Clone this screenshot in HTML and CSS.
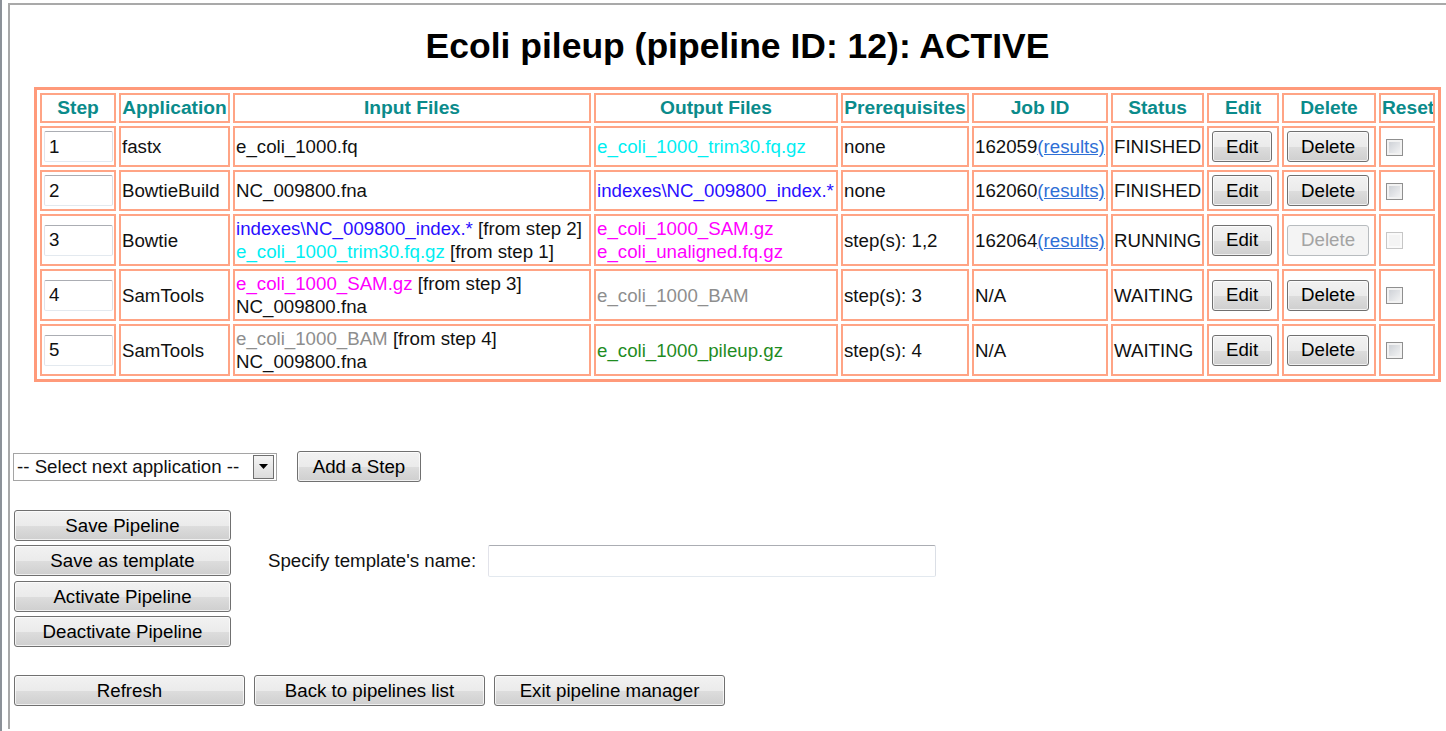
FILE: index.html
```html
<!DOCTYPE html>
<html>
<head>
  <meta charset="utf-8">
  <title>Pipeline manager</title>
  <link rel="stylesheet" href="styles.css">
</head>
<body>
<div class="page">
  <h1 class="title">Ecoli pileup (pipeline ID: 12): ACTIVE</h1>

  <table class="steps">
    <tr>
      <th class="c-step">Step</th>
      <th class="c-app">Application</th>
      <th class="c-in">Input Files</th>
      <th class="c-out">Output Files</th>
      <th class="c-pre">Prerequisites</th>
      <th class="c-job">Job ID</th>
      <th class="c-status">Status</th>
      <th class="c-edit">Edit</th>
      <th class="c-del">Delete</th>
      <th class="c-reset">Reset</th>
    </tr>
    <tr>
      <td><input type="text" class="step-no" value="1"></td>
      <td>fastx</td>
      <td>e_coli_1000.fq</td>
      <td><span class="f-cyan">e_coli_1000_trim30.fq.gz</span></td>
      <td>none</td>
      <td>162059<a href="#" class="results">(results)</a></td>
      <td>FINISHED</td>
      <td><button class="btn">Edit</button></td>
      <td><button class="btn">Delete</button></td>
      <td><input type="checkbox" class="tick"></td>
    </tr>
    <tr>
      <td><input type="text" class="step-no" value="2"></td>
      <td>BowtieBuild</td>
      <td>NC_009800.fna</td>
      <td><span class="f-blue">indexes\NC_009800_index.*</span></td>
      <td>none</td>
      <td>162060<a href="#" class="results">(results)</a></td>
      <td>FINISHED</td>
      <td><button class="btn">Edit</button></td>
      <td><button class="btn">Delete</button></td>
      <td><input type="checkbox" class="tick"></td>
    </tr>
    <tr class="tall">
      <td><input type="text" class="step-no" value="3"></td>
      <td>Bowtie</td>
      <td><span class="f-blue">indexes\NC_009800_index.*</span> [from step 2]<br><span class="f-cyan">e_coli_1000_trim30.fq.gz</span> [from step 1]</td>
      <td><span class="f-pink">e_coli_1000_SAM.gz</span><br><span class="f-pink">e_coli_unaligned.fq.gz</span></td>
      <td>step(s): 1,2</td>
      <td>162064<a href="#" class="results">(results)</a></td>
      <td>RUNNING</td>
      <td><button class="btn">Edit</button></td>
      <td><button class="btn" disabled>Delete</button></td>
      <td><input type="checkbox" class="tick" disabled></td>
    </tr>
    <tr class="tall">
      <td><input type="text" class="step-no" value="4"></td>
      <td>SamTools</td>
      <td><span class="f-pink">e_coli_1000_SAM.gz</span> [from step 3]<br>NC_009800.fna</td>
      <td><span class="f-gray">e_coli_1000_BAM</span></td>
      <td>step(s): 3</td>
      <td>N/A</td>
      <td>WAITING</td>
      <td><button class="btn">Edit</button></td>
      <td><button class="btn">Delete</button></td>
      <td><input type="checkbox" class="tick"></td>
    </tr>
    <tr class="tall">
      <td><input type="text" class="step-no" value="5"></td>
      <td>SamTools</td>
      <td><span class="f-gray">e_coli_1000_BAM</span> [from step 4]<br>NC_009800.fna</td>
      <td><span class="f-green">e_coli_1000_pileup.gz</span></td>
      <td>step(s): 4</td>
      <td>N/A</td>
      <td>WAITING</td>
      <td><button class="btn">Edit</button></td>
      <td><button class="btn">Delete</button></td>
      <td><input type="checkbox" class="tick"></td>
    </tr>
  </table>

  <div class="add-step">
    <div class="picker">
      <select class="app-select">
        <option>-- Select next application --</option>
        <option>fastx</option>
        <option>Bowtie</option>
        <option>BowtieBuild</option>
        <option>SamTools</option>
      </select>
      <span class="drop">
        <svg width="9" height="5" viewBox="0 0 9 5"><path d="M0 0h9L4.5 5z" fill="#000"/></svg>
      </span>
    </div>
    <button class="btn btn-add">Add a Step</button>
  </div>

  <div class="actions">
    <button class="btn">Save Pipeline</button>
    <span></span>
    <button class="btn">Save as template</button>
    <div class="template">
      <label for="tname">Specify template's name:</label>
      <input type="text" id="tname" class="tname">
    </div>
    <button class="btn">Activate Pipeline</button>
    <span></span>
    <button class="btn">Deactivate Pipeline</button>
    <span></span>
  </div>

  <div class="nav">
    <button class="btn btn-wide">Refresh</button>
    <button class="btn btn-wide">Back to pipelines list</button>
    <button class="btn btn-wide">Exit pipeline manager</button>
  </div>
</div>
</body>
</html>
```

FILE: styles.css
```css
html, body {
  margin: 0;
  height: 100%;
}

body {
  border-left: 2px solid #8c9198;
  background: #fff;
  font-family: "Liberation Sans", Arial, sans-serif;
  font-size: 18.7px;
  color: #111;
}

.page {
  margin: 3px 0 0 6px;
  border-left: 2px solid #a9a9a9;
  border-top: 2px solid #a9a9a9;
  min-height: calc(100% - 5px);
  box-sizing: border-box;
}

.title {
  margin: 20px 0 0 24px;
  width: 1407px;
  text-align: center;
  font-size: 35.5px;
  line-height: 42px;
  font-weight: bold;
  color: #000;
}

/* steps table */
.steps {
  margin: 20px 0 0 24px;
  width: 1407px;
  table-layout: fixed;
  border: 3px solid #ff9a7a;
  border-spacing: 3px;
}

.steps th, .steps td {
  box-sizing: border-box;
  border: 2px solid #ffa485;
  padding: 1px;
  vertical-align: middle;
  white-space: nowrap;
  overflow: hidden;
}

.steps th {
  color: #0a8b8b;
  font-size: 19.2px;
  line-height: 24px;
  text-align: center;
}

.steps td {
  line-height: 23px;
  text-align: left;
}

.steps .tall td {
  height: 52px;
}

.c-step { width: 76px; }
.c-app { width: 111px; }
.c-in { width: 358px; }
.c-out { width: 244px; }
.c-pre { width: 128px; }
.c-job { width: 136px; }
.c-status { width: 93px; }
.c-edit { width: 72px; }
.c-del { width: 94px; }
.c-reset { width: 56px; }

.f-cyan { color: #00eef2; }
.f-blue { color: #2a0fff; }
.f-pink { color: #ff00ff; }
.f-gray { color: #8e8e8e; }
.f-green { color: #1f8c1f; }

.results {
  color: #2f6fd6;
  text-decoration: underline;
}

/* form controls */
.step-no, .tname {
  box-sizing: border-box;
  border: 1px solid;
  border-color: #abadb3 #dbdfe6 #e3e9ef #e2e3ea;
  border-radius: 2px;
  font: inherit;
  color: #111;
  background: #fff;
  outline: none;
}

.step-no {
  display: block;
  width: 69px;
  height: 31px;
  margin: 2px 0 2px 1px;
  padding: 0 4px;
}

.btn {
  box-sizing: border-box;
  height: 31px;
  padding: 0 13px;
  margin: 0 2px;
  border: 1px solid #707070;
  border-radius: 3px;
  background: linear-gradient(#f2f2f2 0%, #ebebeb 50%, #dddddd 51%, #cfcfcf 100%);
  box-shadow: inset 0 0 0 1px rgba(255, 255, 255, 0.7);
  font-family: inherit;
  font-size: 18.7px;
  color: #000;
  vertical-align: middle;
}

.btn:disabled {
  color: #a3a3a3;
  border-color: #b8bcbf;
  background: #f4f4f4;
  box-shadow: none;
}

.tick {
  appearance: none;
  -webkit-appearance: none;
  box-sizing: border-box;
  width: 17px;
  height: 17px;
  margin: 3px 3px 3px 4px;
  border: 1px solid #8f8f8f;
  background: linear-gradient(135deg, #c8ccd2, #f8f8f8);
  box-shadow: inset 0 0 0 2px #f2f2f2;
  vertical-align: middle;
}

.tick:disabled {
  border-color: #c6c6c6;
  background: #f4f4f4;
  box-shadow: inset 0 0 0 2px #fafafa;
}

/* add step row */
.add-step {
  display: flex;
  align-items: center;
  gap: 18px;
  margin: 69px 0 0 3px;
}

.picker {
  position: relative;
  width: 264px;
  height: 28px;
}

.app-select {
  appearance: none;
  -webkit-appearance: none;
  box-sizing: border-box;
  width: 100%;
  height: 100%;
  border: 1px solid #a5a5a5;
  border-radius: 0;
  padding: 0 0 0 3px;
  background: #fff;
  font: inherit;
  color: #111;
  outline: none;
}

.drop {
  position: absolute;
  top: 2px;
  right: 3px;
  bottom: 2px;
  width: 21px;
  box-sizing: border-box;
  border: 1px solid #6f6f6f;
  background: linear-gradient(#f4f4f4, #dcdcdc);
  display: flex;
  align-items: center;
  justify-content: center;
  pointer-events: none;
}

.btn-add {
  width: 124px;
  padding: 0;
}

/* pipeline actions */
.actions {
  display: grid;
  grid-template-columns: 217px auto;
  row-gap: 4px;
  margin: 28px 0 0 4px;
}

.actions .btn {
  margin: 0;
  width: 217px;
  padding: 0;
}

.template {
  display: flex;
  align-items: center;
  gap: 12px;
  margin-left: 37px;
}

.tname {
  width: 448px;
  height: 32px;
  padding: 0 4px;
}

.nav {
  display: flex;
  gap: 9px;
  margin: 28px 0 0 4px;
}

.nav .btn {
  margin: 0;
  width: 231px;
  padding: 0;
}
```
